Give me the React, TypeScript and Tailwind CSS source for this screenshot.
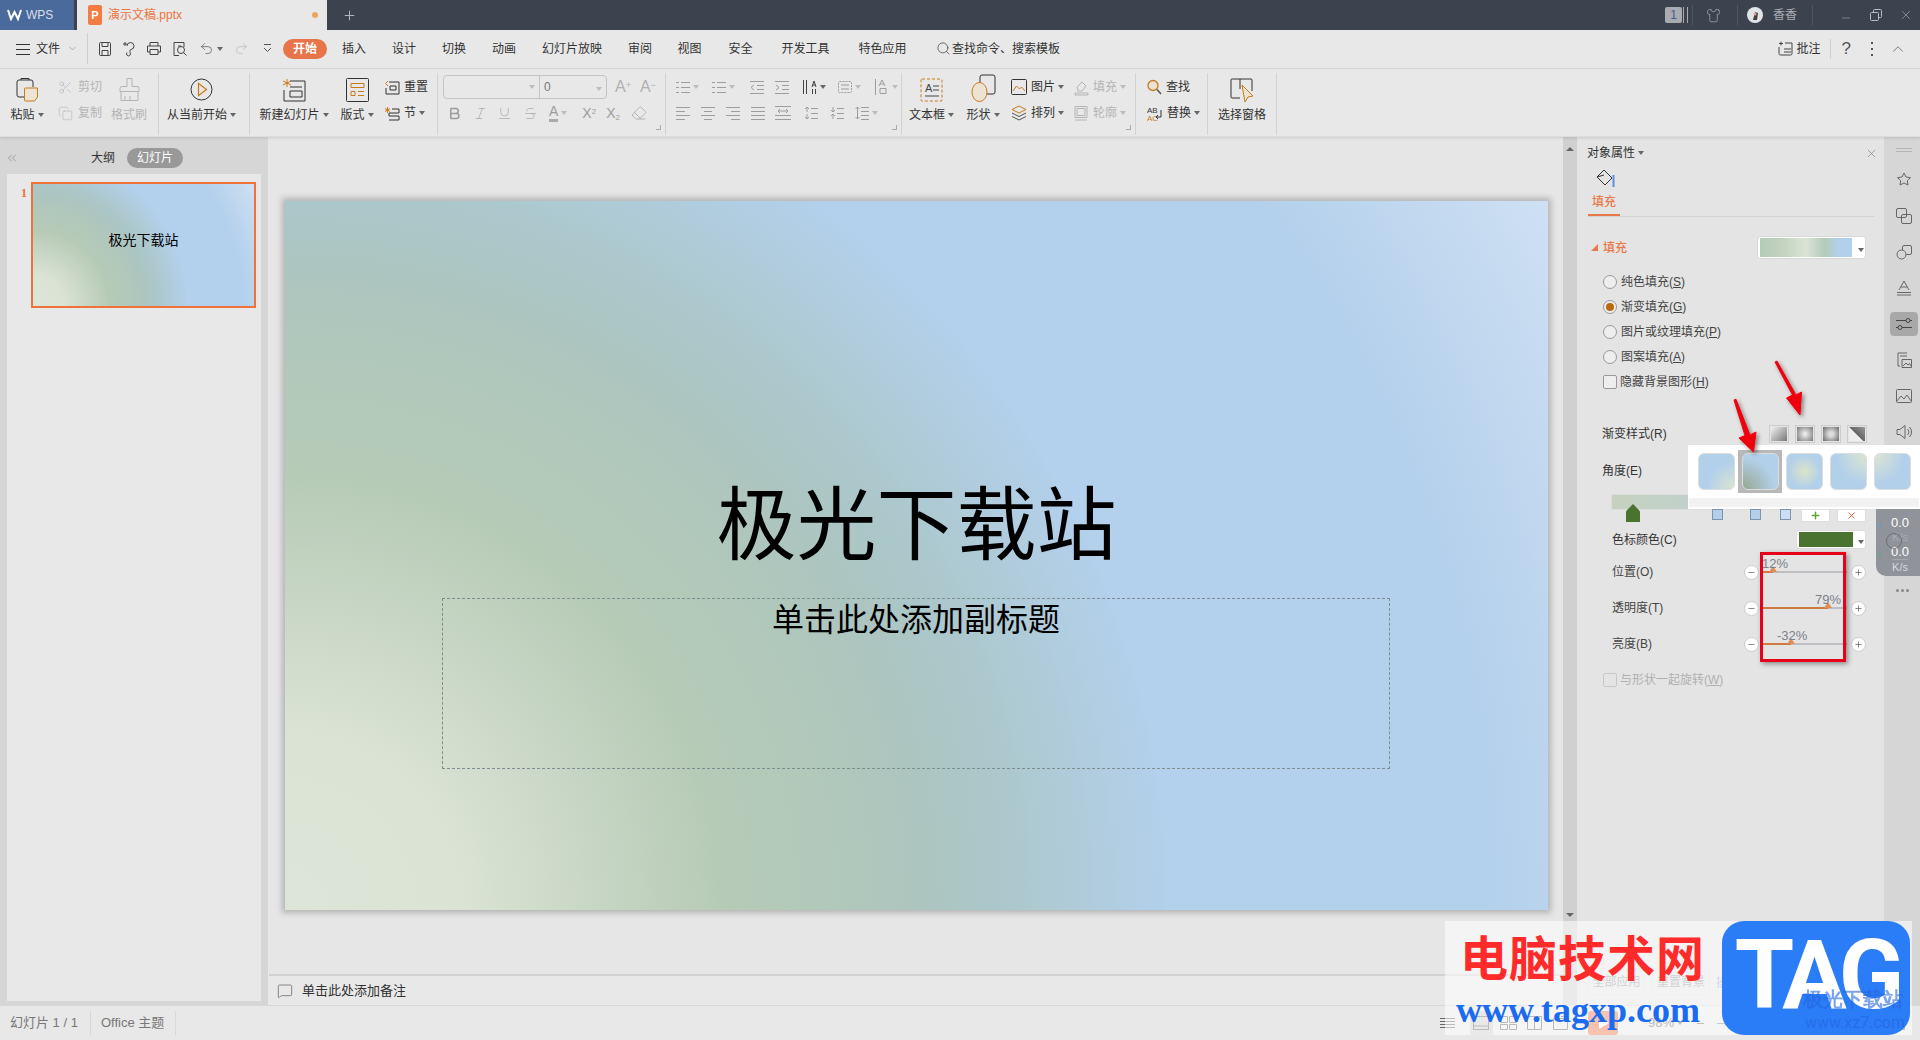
import type { ReactNode } from "react";
import {
  Bold,
  Copy,
  Italic,
  Minus,
  Plus,
  Scissors,
  Search,
  Shirt,
  Strikethrough,
  Underline,
  X,
  ChevronDown,
  ChevronUp,
  ChevronsLeft,
  Redo2,
  Undo2,
  Eraser,
  MessageSquare,
} from "lucide-react";

const ORANGE = "#c77a1a";

function Svg({ w, h, children, className }: { w: number; h: number; children: ReactNode; className?: string }) {
  return (
    <svg width={w} height={h} viewBox={`0 0 ${w} ${h}`} fill="none" stroke="currentColor" strokeWidth={1} className={className}>
      {children}
    </svg>
  );
}

function Caret({ light }: { light?: boolean }) {
  return (
    <span
      className={
        light
          ? "ml-[3px] inline-block border-x-[3px] border-t-[4px] border-x-transparent border-t-[#bdbdbd]"
          : "ml-[3px] inline-block border-x-[3px] border-t-[4px] border-x-transparent border-t-[#666]"
      }
    />
  );
}

function Sep() {
  return <div className="my-[4px] h-[62px] w-px shrink-0 bg-[#d2d2d2]" />;
}

function Lines({ ys, x1 = 0, x2 = 14, w = 14, h = 14 }: { ys: number[]; x1?: number; x2?: number; w?: number; h?: number }) {
  return (
    <Svg w={w} h={h}>
      {ys.map((y) => (
        <path key={y} d={`M${x1} ${y + 0.5}H${x2}`} />
      ))}
    </Svg>
  );
}

function BigBtn({ w, icon, label, caret, gray }: { w: number; icon: ReactNode; label: string; caret?: boolean; gray?: boolean }) {
  return (
    <div className="flex shrink-0 flex-col items-center" style={{ width: w }}>
      <div className="flex h-[33px] items-end justify-center">{icon}</div>
      <div className={gray ? "mt-[4px] flex h-[18px] items-center whitespace-nowrap text-[#b4b4b4]" : "mt-[4px] flex h-[18px] items-center whitespace-nowrap"}>
        {label}
        {caret && <Caret />}
      </div>
    </div>
  );
}

function SmallBtn({ icon, label, caret, gray }: { icon: ReactNode; label: string; caret?: boolean; gray?: boolean }) {
  return (
    <div className={gray ? "flex h-[26px] items-center gap-[4px] whitespace-nowrap text-[#b4b4b4]" : "flex h-[26px] items-center gap-[4px] whitespace-nowrap"}>
      {icon}
      <span className="flex items-center">
        {label}
        {caret && <Caret light={gray} />}
      </span>
    </div>
  );
}

function CornerMark() {
  return <div className="absolute bottom-[6px] right-[4px] h-[5px] w-[5px] border-b border-r border-[#aaa]" />;
}

function TitleBar() {
  return (
    <div className="flex h-[30px] shrink-0 items-center bg-[#3d424f] text-[#b9bcc4]">
      <div className="flex h-full w-[74px] items-center gap-[4px] bg-[#4a6a9b] pl-[7px] text-[12px] text-[#d8dfe9]">
        <svg width="15" height="12" viewBox="0 0 15 12" fill="none" stroke="#fff" strokeWidth="2">
          <path d="M1 1l3 9 3.500-7 3.500 7 3-9" />
        </svg>
        WPS
      </div>
      <div className="ml-[3px] flex h-full w-[250px] items-center bg-[#e8e8e8] pl-[11px] text-[12px] text-[#e8743f]">
        <div className="flex h-[20px] w-[14px] items-center justify-center rounded-[2px] bg-[#f47b42] text-[11px] font-bold leading-none text-white">P</div>
        <span className="ml-[6px] w-[204px]">演示文稿.pptx</span>
        <span className="h-[6px] w-[6px] rounded-full bg-[#eda45f]" />
      </div>
      <Plus size={15} strokeWidth={1.5} className="ml-[15px]" />
      <div className="ml-auto flex h-[16px] w-[17px] items-center justify-center rounded-[2px] bg-[#a9abb1] text-[12px] leading-none text-[#3f5f88]">1</div>
      <div className="ml-[1px] h-[16px] w-[5px] border-x border-[#a9abb1]" />
      <div className="ml-[4px] h-[20px] w-px bg-[#52565f]" />
      <Shirt size={15} strokeWidth={1} className="ml-[13px]" />
      <div className="ml-[16px] h-[20px] w-px bg-[#52565f]" />
      <svg width="16" height="16" viewBox="0 0 16 16" className="ml-[9px]">
        <circle cx="8" cy="8" r="8" fill="#dfe5e6" />
        <path d="M6 13l2-8 3 1-1 7z" fill="#4a3a3a" />
        <circle cx="8" cy="7" r="1.500" fill="#d9a6a0" />
      </svg>
      <span className="ml-[10px] text-[12px] text-[#a9acb4]">香香</span>
      <div className="ml-[15px] h-[20px] w-px bg-[#52565f]" />
      <Minus size={12} strokeWidth={1} className="ml-[27px] mt-[5px]" />
      <svg width="12" height="12" viewBox="0 0 12 12" fill="none" stroke="currentColor" className="ml-[18px]">
        <rect x="0.500" y="3.500" width="8" height="8" rx="1" />
        <path d="M3.500 3V1.500a1 1 0 0 1 1-1h6a1 1 0 0 1 1 1v6a1 1 0 0 1-1 1H9" />
      </svg>
      <X size={14} strokeWidth={1} className="ml-[17px] mr-[7px]" />
    </div>
  );
}

const TABS = [
  { label: "插入", w: 50 },
  { label: "设计", w: 50 },
  { label: "切换", w: 50 },
  { label: "动画", w: 50 },
  { label: "幻灯片放映", w: 86 },
  { label: "审阅", w: 50 },
  { label: "视图", w: 49 },
  { label: "安全", w: 53 },
  { label: "开发工具", w: 77 },
  { label: "特色应用", w: 77 },
];

function MenuRow() {
  return (
    <div className="flex h-[39px] shrink-0 items-center border-b border-[#d8d8d8] bg-[#e8e8e8] pb-px pl-[16px]">
      <Lines ys={[2, 7, 12]} w={14} h={14} />
      <span className="ml-[6px]">文件</span>
      <ChevronDown size={11} strokeWidth={1} className="ml-[7px] text-[#666]" />
      <div className="ml-[9px] h-[31px] w-px bg-[#cfcfcf]" />
      <Svg w={14} h={16} className="ml-[10px] text-[#444]">
        <path d="M1.500 2.500a1 1 0 0 1 1-1h9a1 1 0 0 1 1 1v11a1 1 0 0 1-1 1h-9a1 1 0 0 1-1-1zM4 1.500v4h6v-4M4 14.500v-5h6v5" />
      </Svg>
      <Svg w={15} h={16} className="ml-[10px] text-[#444]">
        <path d="M5 5a3.500 3.500 0 1 1 4 3.500c-1.500.3-1 2-1 3a2 2 0 1 1-3 0M1 3h4M3 1v4" />
      </Svg>
      <Svg w={16} h={15} className="ml-[9px] text-[#444]">
        <path d="M4 5V1.500h8V5M4 11H1.500V5h13v6H12M4 8.500h8v5H4z" />
      </Svg>
      <Svg w={16} h={16} className="ml-[10px] text-[#444]">
        <path d="M12 6V1.500H2v13h5M6 5h3" />
        <circle cx="9" cy="9" r="3.500" />
        <path d="M11.500 11.500l3 3" />
      </Svg>
      <Undo2 size={15} strokeWidth={1} className="ml-[11px] text-[#444]" />
      <Caret />
      <Redo2 size={15} strokeWidth={1} className="ml-[11px] text-[#b4b4b4]" />
      <Svg w={11} h={11} className="ml-[13px] text-[#555]">
        <path d="M2 1.500h7M2 5l3.500 3.500L9 5" />
      </Svg>
      <div className="ml-[10px] flex h-[20px] w-[44px] items-center justify-center rounded-full bg-[#e8744a] font-bold text-white">开始</div>
      <div className="w-[2px]" />
      {TABS.map((tab) => (
        <div key={tab.label} className="flex shrink-0 justify-center" style={{ width: tab.w }}>
          {tab.label}
        </div>
      ))}
      <Search size={15} strokeWidth={1.2} className="ml-[15px] text-[#444]" />
      <span className="ml-px">查找命令、搜索模板</span>
      <Svg w={16} h={15} className="ml-auto text-[#444]">
        <path d="M1 2.500h4M3 .500v4M1 6v6.500a1.500 1.500 0 0 0 1.500 1.500h10a1.500 1.500 0 0 0 1.500-1.500V2H7M6 8h7M6 11h7" />
      </Svg>
      <span className="ml-[3px]">批注</span>
      <div className="ml-[9px] h-[20px] w-px bg-[#d0d0d0]" />
      <span className="ml-[11px] text-[17px] font-light leading-none text-[#555]">?</span>
      <div className="ml-[20px] flex flex-col gap-[4px]">
        <span className="h-[2px] w-[2px] bg-[#555]" />
        <span className="h-[2px] w-[2px] bg-[#555]" />
        <span className="h-[2px] w-[2px] bg-[#555]" />
      </div>
      <ChevronUp size={18} strokeWidth={1} className="ml-[16px] mr-[13px] text-[#555]" />
    </div>
  );
}

function Ribbon() {
  const gray = "text-[#9d9d9d]";
  return (
    <div className="relative z-10 flex h-[68px] shrink-0 border-b border-[#dcdcdc] bg-[#e8e8e8] shadow-[0_1px_3px_rgba(0,0,0,0.12)]">
      {/* Clipboard */}
      <div className="flex w-[158px] shrink-0 pl-[10px]">
        <BigBtn
          w={34}
          label="粘贴"
          caret
          icon={
            <Svg w={23} h={25} className="text-[#333]">
              <path d="M15 20H3a2 2 0 0 1-2-2V5a2 2 0 0 1 2-2h12a2 2 0 0 1 2 2v5M5 3V1.500h8V3" />
              <path d="M8.500 12a1 1 0 0 1 1-1h12v9l-3 4h-9a1 1 0 0 1-1-1z" fill="#ece3d3" stroke={ORANGE} />
            </Svg>
          }
        />
        <div className="ml-[14px] mt-[5px] w-[44px] shrink-0 text-[#b4b4b4]">
          <SmallBtn gray label="剪切" icon={<Scissors size={15} strokeWidth={1} className="mr-[1px]" />} />
          <SmallBtn gray label="复制" icon={<Copy size={15} strokeWidth={1} className="mr-[1px]" />} />
        </div>
        <div className="ml-[9px]">
          <BigBtn
            w={36}
            gray
            label="格式刷"
            icon={
              <Svg w={21} h={25} className="text-[#b4b4b4]">
                <path d="M8 1.500h5v8h5a2 2 0 0 1 2 2v3H1v-3a2 2 0 0 1 2-2h5zM2 14.500v9h17v-9M6 23v-4M11 23v-4" />
              </Svg>
            }
          />
        </div>
      </div>
      <Sep />
      {/* Play */}
      <div className="flex w-[90px] shrink-0 pl-[9px]">
        <BigBtn
          w={67}
          label="从当前开始"
          caret
          icon={
            <Svg w={23} h={23} className="mb-[1px] text-[#333]">
              <circle cx="11.500" cy="11.500" r="10.500" />
              <path d="M8.500 5.500l8 6-8 6z" stroke={ORANGE} strokeWidth={1.2} />
            </Svg>
          }
        />
      </div>
      <Sep />
      {/* Slides */}
      <div className="flex w-[187px] shrink-0 pl-[9px]">
        <BigBtn
          w={70}
          label="新建幻灯片"
          caret
          icon={
            <Svg w={24} h={24} className="text-[#333]">
              <path d="M8 3h15v20H2V12M8 13h12v6H8zM8 9h12" />
              <path d="M5 1v8M1 3l8 4M9 3L1 7" stroke={ORANGE} />
            </Svg>
          }
        />
        <div className="ml-[11px]">
          <BigBtn
            w={34}
            label="版式"
            caret
            icon={
              <Svg w={23} h={24} className="text-[#333]">
                <rect x="0.500" y="0.500" width="22" height="23" rx="1" />
                <path d="M5 5.500h13v4H5zM5 13.500h4v4H5zM12 13.500h6M12 17.500h6" stroke={ORANGE} />
              </Svg>
            }
          />
        </div>
        <div className="ml-[10px] mt-[5px] w-[48px] shrink-0">
          <SmallBtn
            label="重置"
            icon={
              <Svg w={16} h={15} className="text-[#333]">
                <path d="M5 2h10v12H2V8M6 6h6v4H6z" />
                <path d="M4 1L1.500 3.500 4 6" stroke={ORANGE} />
              </Svg>
            }
          />
          <SmallBtn
            label="节"
            caret
            icon={
              <Svg w={16} h={15} className="text-[#333]">
                <path d="M8 3h7v4H5v3h10v4H5" />
                <path d="M3.500 1v6M1 2.500l5 3M6 2.500l-5 3" stroke={ORANGE} />
              </Svg>
            }
          />
        </div>
      </div>
      <Sep />
      {/* Font */}
      <div className="relative w-[227px] shrink-0 pl-[5px] pt-[6px]">
        <div className="flex h-[24px] items-center text-[#b0b0b0]">
          <div className="flex h-full w-[164px] items-center rounded-[4px] border border-[#c4c4c4]">
            <div className="flex h-full w-[96px] items-center justify-end border-r border-[#c4c4c4] pr-[4px]">
              <Caret light />
            </div>
            <span className="ml-[4px] flex-1 text-[#777]">0</span>
            <span className="mr-[4px]">
              <Caret light />
            </span>
          </div>
          <span className="ml-[8px] text-[16px] leading-none">
            A<sup className="text-[9px]">+</sup>
          </span>
          <span className="ml-[9px] text-[16px] leading-none">
            A<sup className="text-[9px]">−</sup>
          </span>
        </div>
        <div className={`mt-[1px] flex h-[26px] items-center ${gray}`}>
          <Bold size={15} strokeWidth={2.5} className="ml-[4px]" />
          <Italic size={15} strokeWidth={1} className="ml-[11px]" />
          <Underline size={15} strokeWidth={1} className="ml-[9px]" />
          <Strikethrough size={15} strokeWidth={1} className="ml-[11px]" />
          <span className="ml-[11px] border-b-[3px] border-[#aaa] text-[14px] leading-[15px]">A</span>
          <Caret light />
          <span className="ml-[15px] text-[14px]">
            X<sup className="text-[8px]">2</sup>
          </span>
          <span className="ml-[10px] text-[14px]">
            X<sub className="text-[8px]">2</sub>
          </span>
          <Eraser size={16} strokeWidth={1} className="ml-[11px]" />
        </div>
        <CornerMark />
      </div>
      <Sep />
      {/* Paragraph */}
      <div className={`relative w-[235px] shrink-0 pl-[10px] pt-[8px] ${gray}`}>
        <div className="flex h-[20px] items-center">
          <Svg w={14} h={14}>
            <path d="M5 2.500h9M5 7.500h9M5 12.500h9M0 2.500h3M0 7.500h3M0 12.500h3" />
          </Svg>
          <Caret light />
          <span className="ml-[13px] flex items-center">
            <Svg w={14} h={14}>
              <path d="M5 2.500h9M5 7.500h9M5 12.500h9M0 2.500h3M0 7.500h3M0 12.500h3" />
            </Svg>
            <Caret light />
          </span>
          <span className="ml-[15px]">
            <Svg w={14} h={14}>
              <path d="M0 1.500h14M7 5.500h7M7 9.500h7M0 13.500h14M4 5L1 7.500 4 10" />
            </Svg>
          </span>
          <span className="ml-[11px]">
            <Svg w={14} h={14}>
              <path d="M0 1.500h14M7 5.500h7M7 9.500h7M0 13.500h14M1 5l3 2.500L1 10" />
            </Svg>
          </span>
          <span className="ml-[14px] flex items-center text-[#444]">
            <Svg w={14} h={14}>
              <path d="M.500 0v14M3.500 0v14M9 7L11 1l2 6M9.500 5h3M9.500 9v5M12.500 9v5" />
            </Svg>
            <Caret />
          </span>
          <span className="ml-[12px] flex items-center">
            <Svg w={14} h={14}>
              <rect x="0.500" y="1.500" width="13" height="11" rx="1" strokeDasharray="2 1" />
              <path d="M3 5h8M3 9h8" />
            </Svg>
            <Caret light />
          </span>
          <span className="ml-[14px] flex items-center">
            <Svg w={14} h={16}>
              <path d="M.500 0v16M4 7l3-6 3 6M5 5h4M5 9.500h6v5H5z" />
            </Svg>
            <Caret light />
          </span>
        </div>
        <div className="mt-[6px] flex h-[20px] items-center">
          <Svg w={14} h={14}>
            <path d="M0 1.500h14M0 5.500h9M0 9.500h14M0 13.500h9" />
          </Svg>
          <span className="ml-[11px]">
            <Svg w={14} h={14}>
              <path d="M0 1.500h14M3 5.500h8M0 9.500h14M3 13.500h8" />
            </Svg>
          </span>
          <span className="ml-[11px]">
            <Svg w={14} h={14}>
              <path d="M0 1.500h14M5 5.500h9M0 9.500h14M5 13.500h9" />
            </Svg>
          </span>
          <span className="ml-[11px]">
            <Lines ys={[1, 5, 9, 13]} />
          </span>
          <span className="ml-[10px]">
            <Svg w={16} h={14}>
              <path d="M0 .500h16M0 13.500h16M0 9.500h16M3 5h10M3 5l2-2M3 5l2 2M13 5l-2-2M13 5l-2 2" />
            </Svg>
          </span>
          <span className="ml-[13px]">
            <Svg w={14} h={14}>
              <path d="M7 2.500h7M7 7.500h7M7 12.500h7M3 1v5M1 3l2-2 2 2M3 8v5M1 11l2 2 2-2" />
            </Svg>
          </span>
          <span className="ml-[12px]">
            <Svg w={14} h={14}>
              <path d="M7 2.500h7M7 7.500h7M7 12.500h7M3 1v5M1 4l2 2 2-2M3 8v5M1 10l2-2 2 2" />
            </Svg>
          </span>
          <span className="ml-[11px] flex items-center">
            <Svg w={14} h={14}>
              <path d="M6 1.500h8M6 5.500h8M6 9.500h8M6 13.500h8M2.500 1v12M.500 3l2-2 2 2M.500 11l2 2 2-2" />
            </Svg>
            <Caret light />
          </span>
        </div>
        <CornerMark />
      </div>
      <Sep />
      {/* Drawing */}
      <div className="relative flex w-[233px] shrink-0 pl-[8px]">
        <BigBtn
          w={43}
          label="文本框"
          caret
          icon={
            <Svg w={23} h={24} className="text-[#444]">
              <rect x="1" y="1" width="21" height="22" rx="1" stroke={ORANGE} strokeDasharray="3 2" />
              <text x="5" y="14" fontSize="11" fill="#444" stroke="none">A</text>
              <path d="M13 8h6M13 12h6M5 18h14" />
            </Svg>
          }
        />
        <div className="ml-[12px]">
          <BigBtn
            w={36}
            label="形状"
            caret
            icon={
              <Svg w={25} h={28} className="text-[#333]">
                <path d="M9 9V3a2 2 0 0 1 2-2h11a2 2 0 0 1 2 2v15a2 2 0 0 1-2 2h-6" />
                <ellipse cx="8.500" cy="18" rx="7.500" ry="9.500" fill="#ece3d3" stroke={ORANGE} />
              </Svg>
            }
          />
        </div>
        <div className="ml-[10px] mt-[5px] w-[58px] shrink-0">
          <SmallBtn
            label="图片"
            caret
            icon={
              <Svg w={16} h={16} className="text-[#333]">
                <rect x="0.500" y="0.500" width="15" height="15" rx="1" />
                <path d="M2 12l3.500-5 3 3 2-2 3.500 4" stroke={ORANGE} />
              </Svg>
            }
          />
          <SmallBtn
            label="排列"
            caret
            icon={
              <Svg w={16} h={16} className="text-[#555]">
                <path d="M8 1l7 3.500L8 8 1 4.500z" stroke={ORANGE} />
                <path d="M1 8l7 3.500L15 8M1 11.500L8 15l7-3.500" />
              </Svg>
            }
          />
        </div>
        <div className="ml-[4px] mt-[5px] w-[58px] shrink-0 text-[#b4b4b4]">
          <SmallBtn
            gray
            label="填充"
            caret
            icon={
              <Svg w={16} h={17}>
                <path d="M4 8l5-5 4 4-4 5H5zM2 14h13v2H2z" />
              </Svg>
            }
          />
          <SmallBtn
            gray
            label="轮廓"
            caret
            icon={
              <Svg w={16} h={17}>
                <path d="M2 1.500h12v11H2zM4 3.500h8v7H4zM2 15h12" />
              </Svg>
            }
          />
        </div>
        <CornerMark />
      </div>
      <Sep />
      {/* Find */}
      <div className="w-[71px] shrink-0 pl-[11px] pt-[5px]">
        <SmallBtn
          label="查找"
          icon={
            <Svg w={15} h={16} className="text-[#555]">
              <circle cx="6" cy="6.500" r="5" fill="#ece3d3" stroke={ORANGE} strokeWidth={1.3} />
              <path d="M10 10.500l4 4.500" strokeWidth={1.5} />
            </Svg>
          }
        />
        <SmallBtn
          label="替换"
          caret
          icon={
            <Svg w={16} h={17} className="text-[#333]">
              <text x="0" y="7.500" fontSize="8" fill="#333" stroke="none">AB</text>
              <text x="0" y="16" fontSize="8" fill={ORANGE} stroke="none">AC</text>
              <path d="M14 5v7H9M11 10l-2 2 2 2" />
            </Svg>
          }
        />
      </div>
      <Sep />
      {/* Selection pane */}
      <div className="flex w-[68px] shrink-0 pl-[10px]">
        <BigBtn
          w={48}
          label="选择窗格"
          icon={
            <Svg w={24} h={24} className="text-[#333]">
              <path d="M10 20H2a1 1 0 0 1-1-1V2a1 1 0 0 1 1-1h19a1 1 0 0 1 1 1v11M10 1v10" />
              <path d="M12 7l11 11-5 1-3 5z" fill="#ece3d3" stroke={ORANGE} />
            </Svg>
          }
        />
      </div>
      <Sep />
    </div>
  );
}

function LeftPanel() {
  return (
    <div className="flex w-[268px] shrink-0 flex-col bg-[#d6d6d6]">
      <div className="flex h-[37px] shrink-0 items-center pt-[5px]">
        <ChevronsLeft size={14} strokeWidth={1} className="ml-[5px] text-[#777]" />
        <span className="ml-[72px]">大纲</span>
        <div className="ml-[12px] flex h-[20px] w-[56px] items-center justify-center rounded-full bg-[#999] text-white">幻灯片</div>
      </div>
      <div className="mx-[7px] mb-[4px] flex flex-1 bg-[#e8e8e8] pl-[14px] pt-[8px]">
        <span className="mt-[3px] w-[10px] font-['Liberation_Serif',serif] text-[12px] font-bold leading-[16px] text-[#ee7038]">1</span>
        <div className="h-[126px] w-[225px] border-2 border-[#f07238] bg-[radial-gradient(circle_farthest-corner_at_0%_100%,#dde5d8_0%,#dbe3d5_12%,#b6cbb6_30%,#adc5bf_44%,#abc7ca_49%,#aecad4_53%,#b3d0ec_61%,#b3d0ec_83%,#cfe0f3_100%)]">
          <div className="flex h-full items-center justify-center pb-[10px] text-[14px] text-black">极光下载站</div>
        </div>
      </div>
    </div>
  );
}

function Center() {
  return (
    <div className="ml-px flex w-[1294px] shrink-0 flex-col bg-[#e6e6e6]">
      <div className="flex-1 pl-[16px] pt-[64px]">
        <div className="h-[709px] w-[1263px] bg-[radial-gradient(circle_farthest-corner_at_0%_100%,#dde5d8_0%,#dbe3d5_12%,#b6cbb6_30%,#adc5bf_44%,#abc7ca_49%,#aecad4_53%,#b3d0ec_61%,#b3d0ec_83%,#cfe0f3_100%)] pt-[285px] shadow-[0_0_6px_3px_rgba(0,0,0,0.22)]">
          <div className="text-center text-[80px] leading-[80px] text-black">极光下载站</div>
          <div className="ml-[157px] mt-[32px] h-[171px] w-[948px] border border-dashed border-[#7d8f8f] pt-[3px] text-center text-[32px] leading-[36px] text-black">
            单击此处添加副标题
          </div>
        </div>
      </div>
      <div className="flex h-[31px] shrink-0 items-center border-t-2 border-[#d2d2d2] bg-[#e8e8e8] pl-[8px]">
        <MessageSquare size={16} strokeWidth={1} className="text-[#555]" />
        <span className="ml-[9px] text-[13px]">单击此处添加备注</span>
      </div>
    </div>
  );
}

function Radio({ label, hotkey, checked }: { label: string; hotkey: string; checked?: boolean }) {
  return (
    <div className="flex h-[25px] items-center pl-[26px] text-[#444]">
      <span className="flex h-[14px] w-[14px] items-center justify-center rounded-full border border-[#999] bg-[#eee]">
        {checked && <span className="h-[8px] w-[8px] rounded-full bg-[#b96a0d]" />}
      </span>
      <span className="ml-[4px]">
        {label}(<u>{hotkey}</u>)
      </span>
    </div>
  );
}

function Slider({ label, percent, labelClass, fillClass, thumbClass }: { label: string; percent: string; labelClass: string; fillClass: string; thumbClass: string }) {
  return (
    <div className="flex h-[36px] items-center pl-[35px]">
      <span className="w-[132px] text-[#444]">{label}</span>
      <span className="flex h-[15px] w-[15px] items-center justify-center rounded-full border border-[#ccc] bg-white text-[#666]">
        <Minus size={9} />
      </span>
      <div className="relative ml-[4px] h-[2px] w-[84px] bg-[#bdbdc2]">
        <div className={`absolute left-0 top-0 h-[2px] bg-[#d07a42] ${fillClass}`} />
        <div className={`absolute -top-[5px] h-0 w-0 border-x-[4px] border-b-[6px] border-x-transparent border-b-[#e28d55] ${thumbClass}`} />
        <span className={`absolute -top-[15px] text-[13px] leading-[16px] text-[#7c808a] ${labelClass}`}>{percent}</span>
      </div>
      <span className="ml-[4px] flex h-[15px] w-[15px] items-center justify-center rounded-full border border-[#ccc] bg-white text-[#666]">
        <Plus size={9} />
      </span>
    </div>
  );
}

const STYLE_SWATCHES = [
  "bg-[linear-gradient(135deg,#f2f2f2,#777)]",
  "bg-[radial-gradient(circle,#f4f4f4,#777)]",
  "bg-[radial-gradient(circle,#ddd_20%,#777_90%)]",
  "bg-[linear-gradient(45deg,#eee_45%,#666_50%,#999)]",
];

function TaskPane() {
  return (
    <div className="flex w-[307px] shrink-0 flex-col bg-[#e4e4e4] text-[#333]">
      <div className="flex h-[32px] shrink-0 items-center pl-[10px] pr-[6px]">
        对象属性
        <Caret />
        <X size={13} strokeWidth={1} className="ml-auto text-[#666]" />
      </div>
      <Svg w={20} h={20} className="ml-[18px] shrink-0 text-[#333]">
        <path d="M9 1l8 8-7 7-8-8zM2 8l7-2" />
        <path d="M18.500 6v12" stroke="#5c8fe0" strokeWidth={2} />
      </Svg>
      <div className="ml-[11px] w-[286px] shrink-0 border-b border-[#d2d2d2]">
        <div className="flex h-[27px] w-[32px] items-center justify-center border-b-2 border-[#e8784a] font-medium text-[#e8784a]">填充</div>
      </div>
      <div className="mt-[19px] flex h-[23px] shrink-0 items-center pl-[14px] pr-[18px] text-[#e8784a]">
        <span className="h-0 w-0 border-b-[7px] border-l-[7px] border-b-[#e8784a] border-l-transparent" />
        <span className="ml-[5px] font-medium">填充</span>
        <div className="ml-auto flex h-[23px] w-[109px] items-center rounded-[3px] border border-[#d8d8d8] bg-white pl-[2px]">
          <div className="h-[19px] w-[92px] bg-[linear-gradient(90deg,#b3cbb8_0%,#c3d3c0_25%,#dbe4d6_50%,#b3cbb8_70%,#b3d0ea_85%)]" />
          <span className="ml-[3px]">
            <Caret />
          </span>
        </div>
      </div>
      <div className="mt-[10px]">
        <Radio label="纯色填充" hotkey="S" />
        <Radio label="渐变填充" hotkey="G" checked />
        <Radio label="图片或纹理填充" hotkey="P" />
        <Radio label="图案填充" hotkey="A" />
        <div className="flex h-[25px] items-center pl-[26px] text-[#444]">
          <span className="h-[14px] w-[14px] rounded-[2px] border border-[#999] bg-[#eee]" />
          <span className="ml-[3px]">
            隐藏背景图形(<u>H</u>)
          </span>
        </div>
      </div>
      <div className="mt-[29px] flex h-[22px] shrink-0 items-center pl-[25px] pr-[17px]">
        渐变样式(R)
        <div className="ml-auto flex gap-[6px]">
          {STYLE_SWATCHES.map((s) => (
            <div key={s} className="h-[18px] w-[20px] border border-[#ccc] p-px">
              <div className={`h-full w-full ${s}`} />
            </div>
          ))}
        </div>
      </div>
      <div className="mt-[15px] flex h-[22px] shrink-0 items-center pl-[25px]">角度(E)</div>
      <div className="relative ml-[34px] mt-[12px] h-[28px] w-[256px] shrink-0">
        <div className="h-[16px] w-full border border-[#ddd] bg-[linear-gradient(90deg,#c6d2be,#b3d0ea)]" />
        <div className="absolute left-[15px] top-[10px] h-[18px] w-[14px] bg-[#4a7330] [clip-path:polygon(50%_0,100%_40%,100%_100%,0_100%,0_40%)]" />
        <div className="absolute left-[101px] top-[15px] h-[11px] w-[11px] border border-[#7d94b0] bg-[#b3d0ea]" />
        <div className="absolute left-[139px] top-[15px] h-[11px] w-[11px] border border-[#7d94b0] bg-[#b3d0ea]" />
        <div className="absolute left-[169px] top-[15px] h-[11px] w-[11px] border border-[#7d94b0] bg-[#cbdef2]" />
        <div className="absolute left-[190px] top-[15px] flex h-[13px] w-[29px] items-end justify-center border border-[#ddd] bg-white">
          <Plus size={11} strokeWidth={3} className="text-[#5fa22f]" />
        </div>
        <div className="absolute left-[226px] top-[15px] flex h-[13px] w-[29px] items-end justify-center border border-[#ddd] bg-white">
          <X size={11} strokeWidth={2} className="text-[#ee5a3c]" />
        </div>
      </div>
      <div className="mt-[8px] flex h-[19px] shrink-0 items-center pl-[35px] pr-[18px]">
        色标颜色(C)
        <div className="ml-auto flex h-[19px] w-[70px] items-center rounded-[3px] border border-[#ddd] bg-white pl-[2px]">
          <div className="h-[15px] w-[54px] bg-[#4a7330]" />
          <span className="ml-[2px]">
            <Caret />
          </span>
        </div>
      </div>
      <div className="mt-[5px] shrink-0">
        <Slider label="位置(O)" percent="12%" labelClass="left-[-1px]" fillClass="w-[10px]" thumbClass="left-[6px]" />
        <Slider label="透明度(T)" percent="79%" labelClass="left-[52px]" fillClass="w-[65px]" thumbClass="left-[61px]" />
        <Slider label="亮度(B)" percent="-32%" labelClass="left-[14px]" fillClass="w-[28px]" thumbClass="left-[24px]" />
      </div>
      <div className="mt-[7px] flex h-[22px] shrink-0 items-center pl-[26px] text-[#b0b0b0]">
        <span className="h-[14px] w-[14px] rounded-[2px] border border-[#c8c8c8]" />
        <span className="ml-[3px]">
          与形状一起旋转(<u>W</u>)
        </span>
      </div>
      <div className="mt-auto flex h-[37px] shrink-0 items-start pl-[11px] text-[#999]">
        <div className="flex h-[27px] w-[57px] items-center justify-center border border-[#ddd]">全部应用</div>
        <div className="ml-[7px] flex h-[27px] w-[58px] items-center justify-center border border-[#ddd]">重置背景</div>
        <span className="ml-[6px] mt-[6px] text-[#8ba6d8]">操作技巧</span>
      </div>
    </div>
  );
}

function SideIcon({ children, active }: { children: ReactNode; active?: boolean }) {
  return (
    <div className={active ? "flex h-[24px] w-[28px] items-center justify-center rounded-[4px] bg-[#a8a8a8]" : "flex h-[24px] w-[28px] items-center justify-center"}>
      {children}
    </div>
  );
}

function SideBar() {
  return (
    <div className="flex w-[36px] shrink-0 flex-col items-start gap-[12px] bg-[#d6d6d6] pl-[6px] pt-[11px] text-[#666]">
      <div className="mb-[4px] ml-[6px] h-[4px] w-[16px] border-y border-[#b4b4b4]" />
      <SideIcon>
        <Svg w={16} h={16}>
          <path d="M8 1l2 4 4.500.7-3.200 3.100.7 4.200L8 11l-4 2 .7-4.200L1.500 5.700 6 5z" />
        </Svg>
      </SideIcon>
      <SideIcon>
        <Svg w={16} h={16}>
          <rect x="0.500" y="0.500" width="10" height="9" rx="1.500" />
          <rect x="5.500" y="6.500" width="10" height="9" rx="1.500" />
        </Svg>
      </SideIcon>
      <SideIcon>
        <Svg w={16} h={16}>
          <rect x="6.500" y="1.500" width="9" height="9" rx="1.500" />
          <circle cx="5.500" cy="10.500" r="4.500" fill="#d6d6d6" />
        </Svg>
      </SideIcon>
      <SideIcon>
        <Svg w={16} h={16}>
          <path d="M3 10L8 1l5 9M5 7h6M1 12.500h14M1 15h14" />
        </Svg>
      </SideIcon>
      <SideIcon active>
        <Svg w={16} h={14} className="text-[#444]">
          <path d="M0 3.500h10M14 3.500h2M0 10.500h2M6 10.500h10" />
          <circle cx="12" cy="3.500" r="2" />
          <circle cx="4" cy="10.500" r="2" />
        </Svg>
      </SideIcon>
      <SideIcon>
        <Svg w={16} h={16}>
          <path d="M11 1H2v13h2M4 4h7M6 7.500h9.500v8H6zM7 14l3-3 2 2 1.500-1.500L15 14" />
        </Svg>
      </SideIcon>
      <SideIcon>
        <Svg w={16} h={16}>
          <rect x="0.500" y="1.500" width="15" height="13" rx="1" />
          <path d="M1 13l4-5 3 3 3-4 4 6" />
        </Svg>
      </SideIcon>
      <SideIcon>
        <Svg w={16} h={16}>
          <path d="M1 5.500h3l5-4v13l-5-4H1zM11.500 5a4 4 0 0 1 0 6M13.500 3a7 7 0 0 1 0 10" />
        </Svg>
      </SideIcon>
    </div>
  );
}

function StatusBar() {
  return (
    <div className="flex h-[35px] shrink-0 items-center border-t border-[#d8d8d8] bg-[#e8e8e8] text-[13px] text-[#777]">
      <span className="ml-[10px]">幻灯片 1 / 1</span>
      <div className="ml-[12px] h-[24px] w-px bg-[#d8d8d8]" />
      <span className="ml-[10px]">Office 主题</span>
      <div className="ml-[11px] h-[24px] w-px bg-[#d8d8d8]" />
      <div className="ml-auto mr-[15px] flex items-center text-[#666]">
        <Lines ys={[1, 4, 7, 10]} w={15} h={12} x2={15} />
        <div className="ml-[15px] flex h-[24px] w-[23px] items-center justify-center rounded-[3px] bg-[#cfcfcf]">
          <Svg w={16} h={14}>
            <rect x="0.500" y="0.500" width="15" height="13" />
            <path d="M1 10h14" />
          </Svg>
        </div>
        <Svg w={17} h={14} className="ml-[7px]">
          <path d="M.500.500h7v6h-7zM9.500.500h7v6h-7zM.500 8.500h7v5h-7zM9.500 8.500h7v5h-7z" />
        </Svg>
        <Svg w={15} h={14} className="ml-[10px]">
          <path d="M.500.500h14v13H.500zM7.500.500v13" />
        </Svg>
        <Svg w={15} h={14} className="ml-[11px]">
          <path d="M.500 2.500h14v11H.500zM8 .500h4" />
        </Svg>
        <div className="ml-[20px] flex h-[24px] w-[30px] items-center justify-center rounded-[3px] bg-[#ee7a4a]">
          <span className="ml-[2px] h-0 w-0 border-y-[6px] border-l-[10px] border-y-transparent border-l-white" />
        </div>
        <span className="ml-[30px]">98%</span>
        <Caret />
        <Minus size={11} className="ml-[12px]" />
        <div className="relative ml-[11px] h-px w-[66px] bg-[#888]">
          <span className="absolute -top-[5px] right-[-7px] h-[11px] w-[11px] rounded-full border border-[#667] bg-[#e8e8e8]" />
        </div>
        <Plus size={12} className="ml-[83px]" />
        <Svg w={14} h={14} className="ml-[13px]">
          <path d="M.500 4V.500H4M10 .500h3.500V4M13.500 10v3.500H10M4 13.500H.500V10" />
        </Svg>
      </div>
    </div>
  );
}

const GRADIENT_SWATCHES = [
  { cls: "bg-[radial-gradient(circle_at_100%_100%,#dbe4d0_0%,#b3d0ea_55%)]", selected: false },
  { cls: "bg-[radial-gradient(circle_at_0%_100%,#98a78f_0%,#a9c4cf_45%,#b3d0ea_65%)]", selected: true },
  { cls: "bg-[radial-gradient(circle_at_50%_50%,#dde5c8_0%,#b3d0ea_65%)]", selected: false },
  { cls: "bg-[radial-gradient(circle_at_100%_0%,#dde5d0_0%,#b3d0ea_60%)]", selected: false },
  { cls: "bg-[radial-gradient(circle_at_0%_0%,#dde5d0_0%,#b3d0ea_60%)]", selected: false },
];

function GradientPopup() {
  return (
    <div className="absolute left-[1688px] top-[445px] z-20 h-[64px] w-[232px] bg-white">
      <div className="flex h-[53px] items-center pl-[6px]">
        {GRADIENT_SWATCHES.map((s) => (
          <div key={s.cls} className={s.selected ? "flex h-[43px] w-[44px] items-center justify-center bg-[#b8b8b8]" : "flex h-[43px] w-[44px] items-center justify-center"}>
            <div className={`h-[37px] w-[37px] rounded-[6px] border border-[#ddd] ${s.cls}`} />
          </div>
        ))}
      </div>
      <div className="mx-px h-[9px] bg-[#f2f2f2]" />
    </div>
  );
}

function NetWidget() {
  return (
    <>
      <div className="absolute left-[1876px] top-[509px] z-10 flex h-[67px] w-[44px] flex-col items-center rounded-bl-[10px] bg-[#909399] pt-[7px] text-[13px] leading-[14px] text-white">
        <span className="ml-[4px]">0.0</span>
        <span className="ml-[4px] text-[11px] text-[#a9abb0]">K/s</span>
        <span className="ml-[4px] mt-[1px]">0.0</span>
        <span className="ml-[4px] border-t border-[#a5a7ac] text-[11px] text-[#d8d9dc]">K/s</span>
        <span className="absolute left-[10px] top-[24px] h-[16px] w-[16px] rounded-full border border-[#555] opacity-60" />
        <span className="absolute left-[1px] top-[10px] text-[10px] text-[#37a7ff]">↑</span>
        <span className="absolute left-[1px] top-[38px] text-[10px] text-[#16c060]">↓</span>
      </div>
      <div className="absolute left-[1896px] top-[589px] z-10 flex gap-[2px]">
        <span className="h-[3px] w-[3px] rounded-full bg-[#888]" />
        <span className="h-[3px] w-[3px] rounded-full bg-[#888]" />
        <span className="h-[3px] w-[3px] rounded-full bg-[#888]" />
      </div>
    </>
  );
}

function Annotations() {
  return (
    <>
      <svg className="absolute left-[1720px] top-[350px] z-30 overflow-visible" width="100" height="110" viewBox="0 0 100 110" fill="none">
        <defs>
          <filter id="arrowShadow" x="-30%" y="-30%" width="160%" height="160%">
            <feDropShadow dx="2" dy="2" stdDeviation="2" floodColor="#000" floodOpacity="0.45" />
          </filter>
        </defs>
        <g filter="url(#arrowShadow)" fill="#ee0010">
          <path d="M14 50l2-.8L30 85l6-3-2.500 20L19 88l6-2.500z" stroke="#ee0010" />
          <path d="M55 12l2-1L76 45l5.500-3L80 65 66.500 48l6-3z" stroke="#ee0010" />
        </g>
      </svg>
      <div className="absolute left-[1760px] top-[552px] z-30 h-[110px] w-[86px] border-[3px] border-[#e6001a] shadow-[2px_2px_5px_rgba(0,0,0,0.4)]" />
    </>
  );
}

function Watermark() {
  return (
    <div className="absolute left-[1445px] top-[921px] z-40 flex h-[114px] w-[467px] items-stretch bg-white/55">
      <div className="flex w-[277px] flex-col pl-[15px]">
        <div className="mt-[5px] font-['Noto_Sans_CJK_SC',sans-serif] text-[48px] font-bold leading-[58px] tracking-[1px] text-[#ff2a2a]">电脑技术网</div>
        <div className="mt-[8px] -ml-[4px] font-['Liberation_Serif',serif] text-[36px] font-bold leading-[36px] text-[#1a6bf0]">www.tagxp.com</div>
      </div>
      <div className="relative flex w-[188px] items-center justify-center overflow-hidden rounded-[22px] bg-[#2b7cf7] font-['Roboto',sans-serif] text-[96px] font-bold leading-none tracking-[-7px] text-white">
        <span className="-mt-[6px]">TAG</span>
        <span className="absolute bottom-[24px] left-[81px] text-[20px] font-bold leading-[24px] tracking-normal text-[#2468e0] opacity-60">极光下载站</span>
        <span className="absolute bottom-[2px] left-[83px] text-[16px] font-normal leading-[20px] tracking-normal text-[#2468e0] opacity-70">www.xz7.com</span>
      </div>
    </div>
  );
}

export default function App() {
  return (
    <div className="relative flex h-[1040px] w-[1920px] flex-col overflow-hidden bg-[#e8e8e8] font-['Liberation_Sans','Noto_Sans_CJK_SC',sans-serif] text-[12px] text-[#333]">
      <TitleBar />
      <MenuRow />
      <Ribbon />
      <div className="flex min-h-0 flex-1">
        <LeftPanel />
        <Center />
        <div className="flex w-[14px] shrink-0 flex-col items-center justify-between bg-[#d0d0d0] pb-[88px] pt-[10px]">
          <span className="h-0 w-0 border-x-[4px] border-b-[4px] border-x-transparent border-b-[#666]" />
          <span className="h-0 w-0 border-x-[4px] border-t-[4px] border-x-transparent border-t-[#666]" />
        </div>
        <TaskPane />
        <SideBar />
      </div>
      <StatusBar />
      <GradientPopup />
      <NetWidget />
      <Annotations />
      <Watermark />
    </div>
  );
}
